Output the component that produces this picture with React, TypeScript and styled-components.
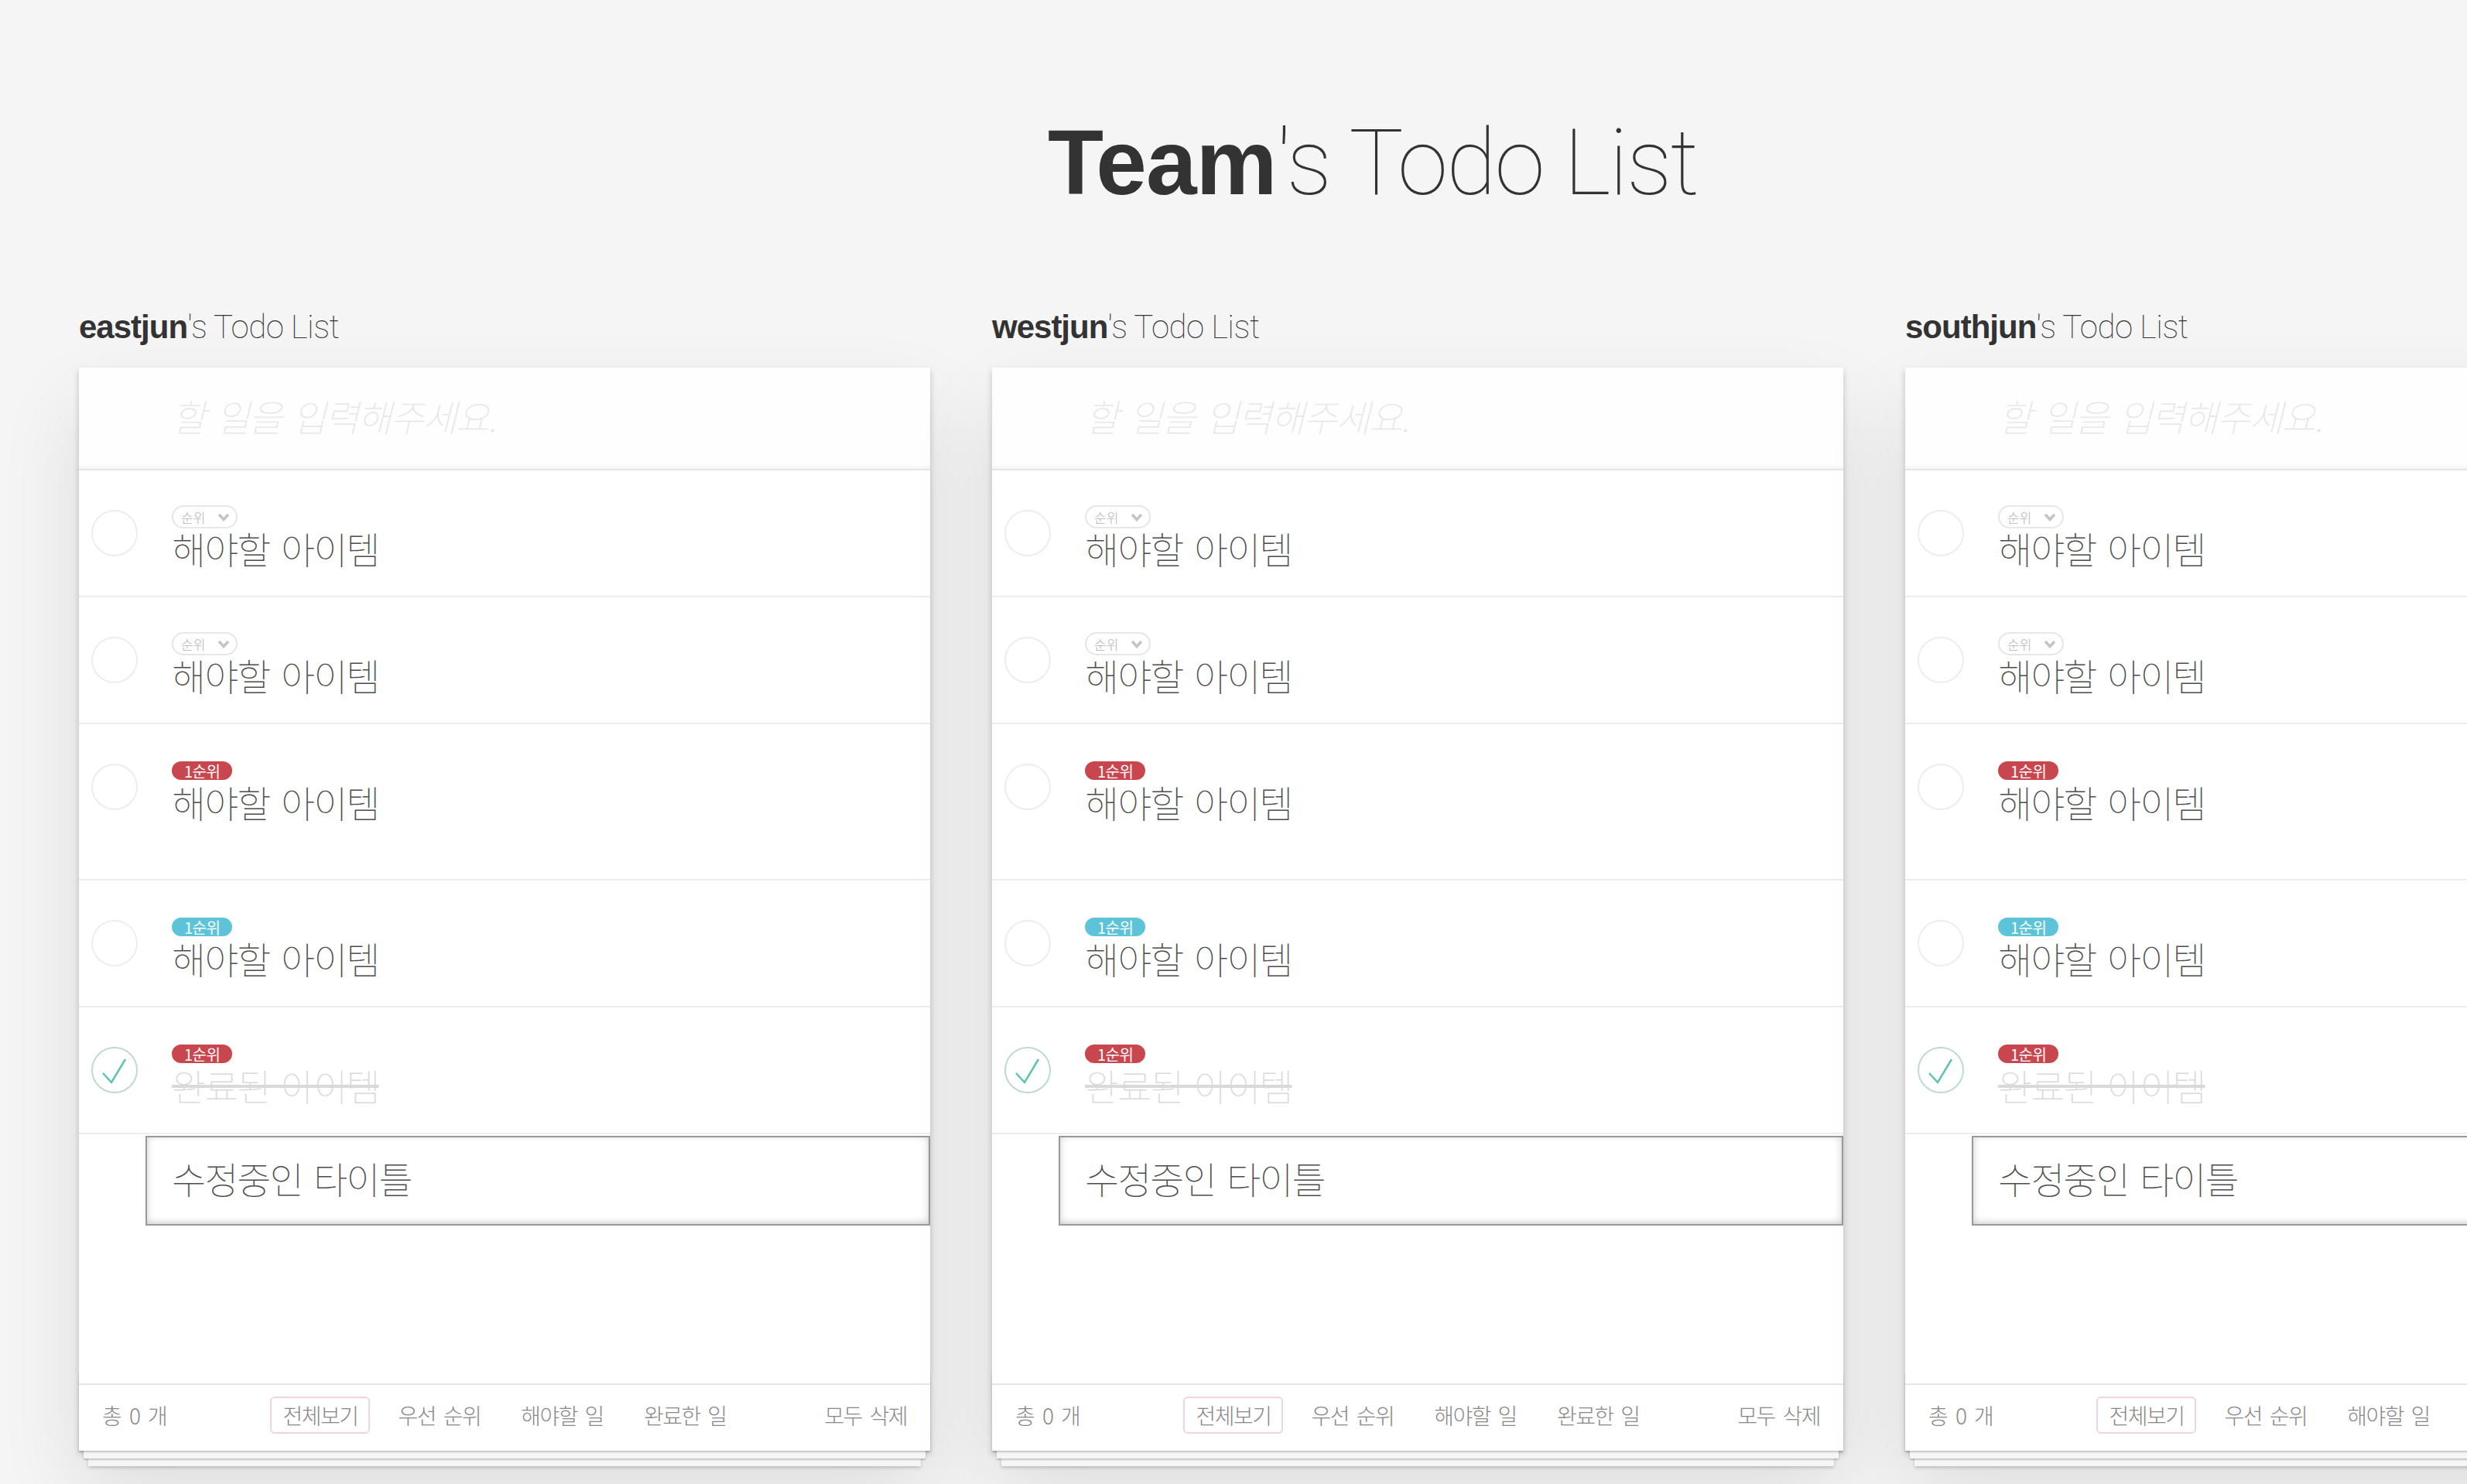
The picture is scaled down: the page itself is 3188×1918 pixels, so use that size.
import React from "react"
import styled, { createGlobalStyle } from "styled-components"

const GlobalStyle = createGlobalStyle`
  html, body {
    margin: 0;
    padding: 0;
  }
  body {
    background: #f5f5f5;
    color: #4d4d4d;
    font-family: "Noto Sans CJK KR", "Liberation Sans", sans-serif;
    overflow: hidden;
    -webkit-font-smoothing: antialiased;
  }
`

const members = ["eastjun", "westjun", "southjun"]

type Tag = "select" | "red" | "blue"

const todos: { tag: Tag; text: string; done?: boolean; extra?: number }[] = [
  { tag: "select", text: "해야할 아이템" },
  { tag: "select", text: "해야할 아이템" },
  { tag: "red", text: "해야할 아이템", extra: 38 },
  { tag: "blue", text: "해야할 아이템" },
  { tag: "red", text: "완료된 아이템", done: true },
]

const filters = ["전체보기", "우선 순위", "해야할 일", "완료한 일"]

const Page = styled.div`
  width: 3548px;
  padding-top: 150px;
  padding-bottom: 60px;
`

const Title = styled.h1`
  margin: 0;
  text-align: center;
  font-family: "Roboto", "Liberation Sans", sans-serif;
  font-weight: 100;
  font-size: 118px;
  line-height: 120px;
  color: #333;
  letter-spacing: -2px;
`

const Bold = styled.b`
  font-family: "Liberation Sans", Arial, sans-serif;
  font-weight: 700;
  letter-spacing: -1px;
`

const Board = styled.div`
  display: flex;
  gap: 80px;
  padding-left: 102px;
  margin-top: 127px;
`

const Column = styled.div`
  flex: 0 0 1100px;
`

const ColumnTitle = styled.h2`
  margin: 0 0 27px;
  font-family: "Roboto", "Liberation Sans", sans-serif;
  font-weight: 100;
  font-size: 42px;
  line-height: 50px;
  color: #333;
  letter-spacing: -0.5px;
`

const Card = styled.section`
  position: relative;
  height: 1400px;
  display: flex;
  flex-direction: column;
  background: #fff;
  box-shadow: 0 4px 8px 0 rgba(0, 0, 0, 0.2), 0 50px 100px 0 rgba(0, 0, 0, 0.1);
`

const NewTodo = styled.input`
  display: block;
  box-sizing: border-box;
  width: 100%;
  height: 131px;
  margin: 0;
  border: none;
  outline: none;
  padding: 28px 32px 36px 120px;
  font-family: "Noto Sans CJK KR", sans-serif;
  font-size: 48px;
  font-weight: 100;
  letter-spacing: -2px;
  word-spacing: 6px;
  color: #4d4d4d;
  background: rgba(0, 0, 0, 0.003);
  box-shadow: inset 0 -4px 2px rgba(0, 0, 0, 0.03);

  &::placeholder {
    font-style: italic;
    font-weight: 100;
    color: #e6e6e6;
  }
`

const List = styled.ul`
  flex: 1;
  margin: 0;
  padding: 0;
  list-style: none;
  border-top: 2px solid #e6e6e6;
`

const Item = styled.li<{ $extra?: number }>`
  display: flex;
  align-items: flex-start;
  padding: 45px 30px ${p => 37 + (p.$extra || 0)}px 0;
  border-bottom: 2px solid #ededed;
`

const Toggle = styled.div`
  flex: 0 0 104px;
  padding-left: 16px;
  margin-top: 6px;
  svg {
    display: block;
  }
`

const ItemBody = styled.div`
  display: flex;
  flex-direction: column;
  align-items: flex-start;
`

const TagSlot = styled.div`
  height: 30px;
  display: flex;
  align-items: center;
`

const PrioritySelect = styled.span`
  box-sizing: border-box;
  height: 30px;
  display: inline-flex;
  align-items: center;
  gap: 16px;
  padding: 0 8px 0 10px;
  border: 2px solid #e6e6e6;
  border-radius: 15px;
  font-size: 17px;
  color: #b3b3b3;
  font-weight: 300;
`

const Badge = styled.span<{ $color: string }>`
  height: 24px;
  display: inline-flex;
  align-items: center;
  padding: 0 16px;
  border-radius: 12px;
  background: ${p => p.$color};
  color: #fff;
  font-size: 20px;
  font-weight: 400;
  letter-spacing: -0.5px;
`

const Label = styled.span<{ $done?: boolean }>`
  font-size: 48px;
  line-height: 50px;
  font-weight: 100;
  letter-spacing: -2px;
  word-spacing: 6px;
  color: ${p => (p.$done ? "#d9d9d9" : "#4d4d4d")};
  text-decoration: ${p => (p.$done ? "line-through" : "none")};
  text-decoration-thickness: 4px;
  text-decoration-color: #d9d9d9;
`

const EditRow = styled.li`
  padding: 2px 0 0 86px;
`

const EditInput = styled.input`
  display: block;
  box-sizing: border-box;
  width: 1014px;
  height: 116px;
  margin: 0;
  padding: 0 32px 8px;
  border: 2px solid #999;
  outline: none;
  font-family: "Noto Sans CJK KR", sans-serif;
  font-size: 48px;
  font-weight: 100;
  letter-spacing: -2px;
  word-spacing: 6px;
  color: #4d4d4d;
  box-shadow: inset 0 -2px 10px 0 rgba(0, 0, 0, 0.2);
`

const Footer = styled.footer`
  position: relative;
  box-sizing: border-box;
  height: 87px;
  padding: 0 30px 8px;
  display: grid;
  grid-template-columns: 1fr auto 1fr;
  align-items: center;
  border-top: 2px solid #e6e6e6;
  font-size: 28px;
  font-weight: 300;
  letter-spacing: -1.5px;
  word-spacing: 5px;
  color: #888;

  &::before {
    content: "";
    position: absolute;
    left: 0;
    right: 0;
    bottom: 0;
    height: 100px;
    pointer-events: none;
    box-shadow: 0 2px 2px rgba(0, 0, 0, 0.2), 0 16px 0 -6px #f6f6f6,
      0 18px 2px -6px rgba(0, 0, 0, 0.2), 0 32px 0 -12px #f6f6f6,
      0 34px 4px -12px rgba(0, 0, 0, 0.2);
  }
`

const Count = styled.span`
  word-spacing: 6px;
`

const Filters = styled.ul`
  display: flex;
  gap: 20px;
  margin: 0;
  padding: 0;
  list-style: none;
`

const Filter = styled.li<{ $selected?: boolean }>`
  box-sizing: border-box;
  height: 48px;
  line-height: 44px;
  padding: 0 14px;
  border: 2px solid ${p => (p.$selected ? "rgba(175, 47, 47, 0.2)" : "transparent")};
  border-radius: 6px;
`

const Clear = styled.span`
  justify-self: end;
`

const Circle = ({ done }: { done?: boolean }) => (
  <svg width="60" height="60" viewBox="0 0 60 60">
    <circle cx="30" cy="30" r="29" fill="none" stroke={done ? "#bddad5" : "#ededed"} strokeWidth="2" />
    {done && (
      <polyline points="15,34 26,46 44,16" fill="none" stroke="#5dc2af" strokeWidth="2.5" />
    )}
  </svg>
)

const Chevron = () => (
  <svg width="16" height="11" viewBox="0 0 16 11">
    <polyline points="2,2 8,8.5 14,2" fill="none" stroke="#c4c4c4" strokeWidth="3.5" />
  </svg>
)

const TagView = ({ tag }: { tag: Tag }) => {
  if (tag === "select")
    return (
      <PrioritySelect>
        순위
        <Chevron />
      </PrioritySelect>
    )
  return <Badge $color={tag === "red" ? "#c8464e" : "#5dc3d8"}>1순위</Badge>
}

const TodoCard = ({ name }: { name: string }) => (
  <Column>
    <ColumnTitle>
      <Bold>{name}</Bold>'s Todo List
    </ColumnTitle>
    <Card>
      <NewTodo placeholder="할 일을 입력해주세요." />
      <List>
        {todos.map((t, i) => (
          <Item key={i} $extra={t.extra}>
            <Toggle>
              <Circle done={t.done} />
            </Toggle>
            <ItemBody>
              <TagSlot>
                <TagView tag={t.tag} />
              </TagSlot>
              <Label $done={t.done}>{t.text}</Label>
            </ItemBody>
          </Item>
        ))}
        <EditRow>
          <EditInput defaultValue="수정중인 타이틀" />
        </EditRow>
      </List>
      <Footer>
        <Count>총 0 개</Count>
        <Filters>
          {filters.map((f, i) => (
            <Filter key={f} $selected={i === 0}>
              {f}
            </Filter>
          ))}
        </Filters>
        <Clear>모두 삭제</Clear>
      </Footer>
    </Card>
  </Column>
)

export default function App() {
  return (
    <Page>
      <GlobalStyle />
      <Title>
        <Bold>Team</Bold>'s Todo List
      </Title>
      <Board>
        {members.map(m => (
          <TodoCard key={m} name={m} />
        ))}
      </Board>
    </Page>
  )
}
